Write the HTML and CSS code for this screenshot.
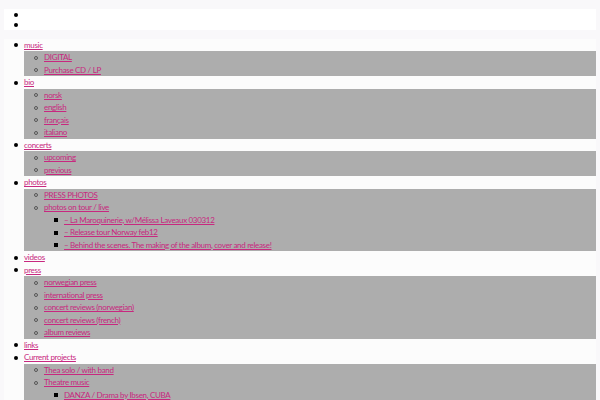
FILE: index.html
```html
<!DOCTYPE html>
<html>
<head>
<meta charset="utf-8">
<link rel="stylesheet" href="styles.css">
</head>
<body>
<div class="page">
  <ul class="menu top">
    <li></li>
    <li></li>
  </ul>
  <ul class="menu main">
    <li><a href="#">music</a>
      <ul class="sub">
        <li><a href="#">DIGITAL</a></li>
        <li><a href="#">Purchase CD / LP</a></li>
      </ul>
    </li>
    <li><a href="#">bio</a>
      <ul class="sub">
        <li><a href="#">norsk</a></li>
        <li><a href="#">english</a></li>
        <li><a href="#">français</a></li>
        <li><a href="#">italiano</a></li>
      </ul>
    </li>
    <li><a href="#">concerts</a>
      <ul class="sub">
        <li><a href="#">upcoming</a></li>
        <li><a href="#">previous</a></li>
      </ul>
    </li>
    <li><a href="#">photos</a>
      <ul class="sub">
        <li><a href="#">PRESS PHOTOS</a></li>
        <li><a href="#">photos on tour / live</a>
          <ul class="sub3">
            <li><a href="#">– La Maroquinerie, w/Mélissa Laveaux 030312</a></li>
            <li><a href="#">– Release tour Norway feb12</a></li>
            <li><a href="#">– Behind the scenes. The making of the album, cover and release!</a></li>
          </ul>
        </li>
      </ul>
    </li>
    <li><a href="#">videos</a></li>
    <li><a href="#">press</a>
      <ul class="sub">
        <li><a href="#">norwegian press</a></li>
        <li><a href="#">international press</a></li>
        <li><a href="#">concert reviews (norwegian)</a></li>
        <li><a href="#">concert reviews (french)</a></li>
        <li><a href="#">album reviews</a></li>
      </ul>
    </li>
    <li><a href="#">links</a></li>
    <li><a href="#">Current projects</a>
      <ul class="sub">
        <li><a href="#">Thea solo / with band</a></li>
        <li><a href="#">Theatre music</a>
          <ul class="sub3">
            <li><a href="#">DANZA / Drama by Ibsen, CUBA</a></li>
          </ul>
        </li>
      </ul>
    </li>
  </ul>
</div>
</body>
</html>
```
FILE: styles.css
```css
html, body {
  margin: 0;
  padding: 0;
  background: #f9f8fa;
}
body {
  font-family: Lato, "Open Sans", sans-serif;
  font-size: 8px;
  letter-spacing: -0.32px;
  line-height: 12.5px;
  color: #000;
}
.page {
  padding: 9px 4px 0 4px;
}
ul {
  list-style: none;
  margin: 0;
  padding: 0;
}
li {
  padding-left: 20px;
}
li::before {
  content: "";
  display: inline-block;
  box-sizing: border-box;
  width: 4px;
  height: 4px;
  margin-left: -10px;
  margin-right: 6px;
  vertical-align: 0.5px;
  border-radius: 50%;
  background: #000;
}
.top {
  background: #ffffff;
  padding-top: 0.5px;
  padding-bottom: 0.5px;
  line-height: 10px;
}
.top li {
  height: 10px;
}
.main {
  margin-top: 8.5px;
  background: #fcfcfc;
}
.sub {
  background: #adadad;
}
.sub > li::before {
  background: transparent;
  border: 1px solid #555;
}
.sub3 > li::before {
  border-radius: 0;
  border: none;
  background: #000;
}
a {
  color: #c8287f;
  text-decoration: underline;
}
```
